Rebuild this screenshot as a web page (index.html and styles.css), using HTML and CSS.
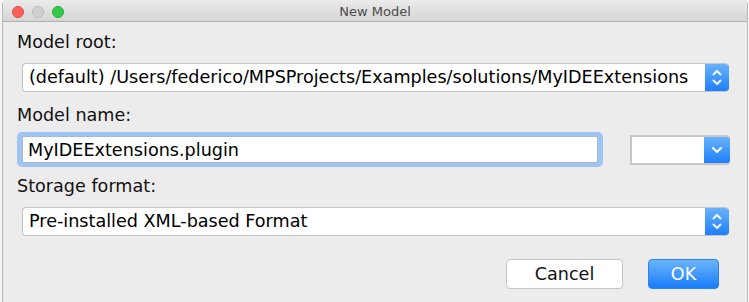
FILE: index.html
```html
<!DOCTYPE html>
<html lang="en">
<head>
    <meta charset="UTF-8">
    <title>New Model</title>
    <link rel="stylesheet" href="styles.css">
</head>
<body>

    <div class="window">
        <div class="titlebar">
            <div class="lights">
                <span class="light red"></span>
                <span class="light gray"></span>
                <span class="light green"></span>
            </div>
            <div class="title">New Model</div>
        </div>

        <div class="content">
            <div class="label">Model root:</div>
            <div class="combo wide">
                <div class="combo-text">(default) /Users/federico/MPSProjects/Examples/solutions/MyIDEExtensions</div>
                <div class="combo-btn">
                    <svg width="24" height="29" viewBox="0 0 24 29">
                        <path d="M8.5 11.5 L12 8 L15.5 11.5 M8.5 17.5 L12 21 L15.5 17.5" fill="none" stroke="#fff" stroke-width="1.8" stroke-linecap="round" stroke-linejoin="round"/>
                    </svg>
                </div>
            </div>

            <div class="label label-2">Model name:</div>
            <div class="name-row">
                <div class="focus-ring">
                    <input class="field" type="text" value="MyIDEExtensions.plugin">
                </div>
                <div class="combo small">
                    <div class="combo-text"></div>
                    <div class="combo-btn">
                        <svg width="26" height="30" viewBox="0 0 26 30">
                            <path d="M9 13 L13 17 L17 13" fill="none" stroke="#fff" stroke-width="2" stroke-linecap="round" stroke-linejoin="round"/>
                        </svg>
                    </div>
                </div>
            </div>

            <div class="label label-3">Storage format:</div>
            <div class="combo wide">
                <div class="combo-text">Pre-installed XML-based Format</div>
                <div class="combo-btn">
                    <svg width="24" height="29" viewBox="0 0 24 29">
                        <path d="M8.5 11.5 L12 8 L15.5 11.5 M8.5 17.5 L12 21 L15.5 17.5" fill="none" stroke="#fff" stroke-width="1.8" stroke-linecap="round" stroke-linejoin="round"/>
                    </svg>
                </div>
            </div>

            <div class="buttons">
                <button class="btn cancel">Cancel</button>
                <button class="btn ok">OK</button>
            </div>
        </div>
    </div>

</body>
</html>
```

FILE: styles.css
```css
body {
    margin: 0;
    background-color: #f5f5f5;
    font-family: "DejaVu Sans", "Liberation Sans", sans-serif;
    width: 749px;
    height: 302px;
    overflow: hidden;
}

.window {
    margin-left: 2px;
    width: 744px;
    height: 310px;
    background-color: #ececec;
    border-left: 1px solid #b9b9b9;
    border-right: 1px solid #b9b9b9;
    border-radius: 5px 5px 0 0;
    overflow: hidden;
}

.titlebar {
    position: relative;
    height: 21px;
    background: linear-gradient(to bottom, #ebebeb, #d5d5d5);
    border-bottom: 1px solid #b1b1b1;
    display: flex;
    align-items: center;
    justify-content: center;
}

.lights {
    position: absolute;
    left: 9px;
    top: 6px;
    display: flex;
    gap: 8px;
}

.light {
    width: 12px;
    height: 12px;
    border-radius: 50%;
    box-sizing: border-box;
}

.light.red {
    background-color: #fc605c;
    border: 1px solid #de4a46;
}

.light.gray {
    background-color: #cfcfcf;
    border: 1px solid #bcbcbc;
}

.light.green {
    background-color: #34c84a;
    border: 1px solid #2aab3b;
}

.title {
    font-size: 13px;
    color: #4b4b4b;
    margin-top: 1px;
}

.content {
    padding: 10px 0 0 14px;
    display: flex;
    flex-direction: column;
}

.label {
    font-size: 17.6px;
    line-height: 20px;
    height: 20px;
    color: #111;
}

.label-2 {
    margin-top: 13px;
}

.label-3 {
    margin-top: 9px;
}

.combo {
    display: flex;
    height: 29px;
    box-sizing: border-box;
    background-color: #fff;
    border: 1px solid #c3c3c3;
    border-right: none;
    border-radius: 4px;
    overflow: hidden;
}

.combo.wide {
    width: 707px;
    margin-left: 5px;
    margin-top: 11px;
}

.combo-text {
    flex: 1;
    font-size: 17.6px;
    line-height: 27px;
    padding-left: 6px;
    color: #000;
    white-space: nowrap;
    overflow: hidden;
}

.combo-btn {
    width: 24px;
    background: linear-gradient(to bottom, #6bb4fb, #1a7dfb);
    display: flex;
    align-items: center;
    justify-content: center;
    margin-top: -1px;
    margin-bottom: -1px;
}

.name-row {
    display: flex;
    align-items: center;
    margin-top: 7px;
    height: 35px;
}

.focus-ring {
    width: 586px;
    height: 35px;
    box-sizing: border-box;
    padding: 4px 5px 4px 5px;
    background-color: #9fc5f4;
    border-radius: 5px;
}

.field {
    width: 100%;
    height: 27px;
    box-sizing: border-box;
    margin: 0;
    border: 1px solid #a9b8cc;
    background-color: #fff;
    font-family: "DejaVu Sans", "Liberation Sans", sans-serif;
    font-size: 17.6px;
    padding: 0 0 0 5px;
    color: #000;
    outline: none;
}

.combo.small {
    width: 100px;
    height: 30px;
    margin-left: 27px;
    border-radius: 0 4px 4px 0;
    border: 2px solid #c6c6c6;
    border-right: none;
}

.combo.small .combo-btn {
    width: 26px;
    margin-top: -2px;
    margin-bottom: -2px;
}

.buttons {
    display: flex;
    justify-content: flex-end;
    gap: 25px;
    margin-top: 23px;
    width: 702px;
}

.btn {
    height: 30px;
    font-family: "DejaVu Sans", "Liberation Sans", sans-serif;
    font-size: 17.6px;
    border-radius: 4px;
    padding: 0;
    box-sizing: border-box;
}

.btn.cancel {
    width: 117px;
    background-color: #fff;
    border: 1px solid #c4c4c4;
    color: #111;
}

.btn.ok {
    width: 71px;
    background: linear-gradient(to bottom, #6bb4fb, #1a7dfb);
    border: 1px solid #2a82f0;
    color: #fff;
}
```
